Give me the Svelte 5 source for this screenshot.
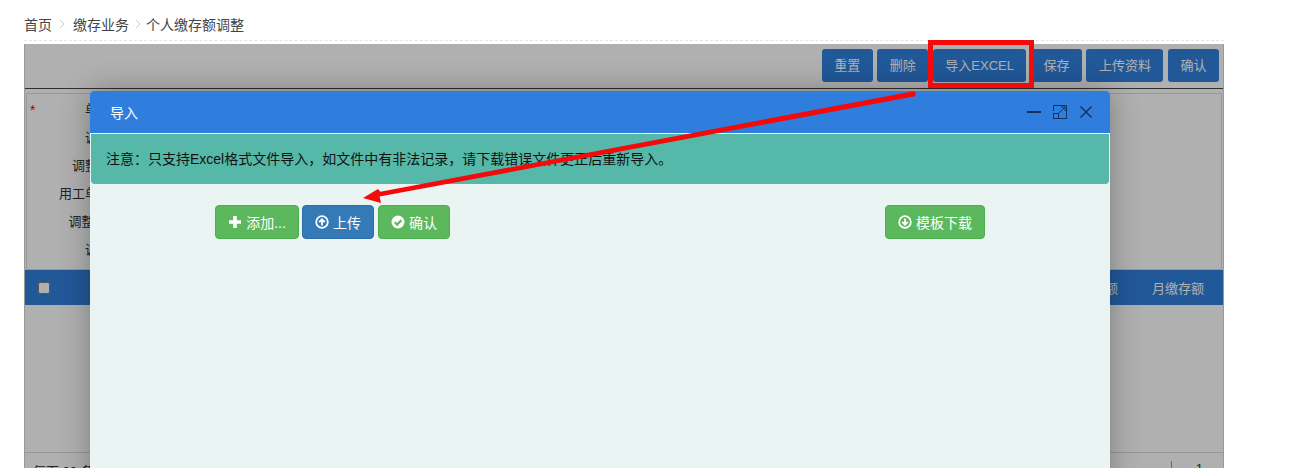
<script>
  const toolbar = ["重置", "删除", "导入EXCEL", "保存", "上传资料", "确认"];
  const fields = [
    { label: "单位名称", required: true },
    { label: "调整类型" },
    { label: "调整后基数" },
    { label: "用工单位编号" },
    { label: "调整后基数:" },
    { label: "调整原因" },
  ];
</script>

<div class="page">
  <div class="crumbs">
    <span>首页</span>
    <svg class="sep" viewBox="0 0 6 10" width="6" height="10"><path d="M1 1l4 4-4 4" /></svg>
    <span>缴存业务</span>
    <svg class="sep near" viewBox="0 0 6 10" width="6" height="10"><path d="M1 1l4 4-4 4" /></svg>
    <span>个人缴存额调整</span>
  </div>

  <div class="panel">
    <div class="sheet">
      <div class="toolbar">
        {#each toolbar as name}
          <button class="tool">{name}</button>
        {/each}
      </div>

      <div class="form">
        {#each fields as f}
          <div class="row">
            <span class="star">{f.required ? "*" : ""}</span>
            <span class="lbl">{f.label}</span>
          </div>
        {/each}
      </div>

      <div class="thead">
        <input type="checkbox" class="check" />
        <span class="th th-a">缴存基数额</span>
        <span class="th">月缴存额</span>
      </div>

      <div class="tbody"></div>

      <div class="foot">
        <span>每页 20 条</span>
        <span class="pager">1</span>
      </div>
    </div>

    <div class="mask"></div>

    <div class="modal">
      <div class="modal-head">
        <span class="modal-title">导入</span>
        <div class="win">
          <svg viewBox="0 0 14 14" width="14" height="14"><path d="M0 7h14" stroke-width="2" /></svg>
          <svg viewBox="0 0 14 14" width="14" height="14">
            <path d="M.5 6V.5h13v13H6" />
            <path d="M6 8l6-6M8 2h4v4" />
            <rect x=".5" y="8.500" width="5" height="5" />
          </svg>
          <svg class="x" viewBox="0 0 12 12" width="12" height="12"><path d="M.5.5l11 11M11.500.5l-11 11" stroke-width="1.4" /></svg>
        </div>
      </div>
      <div class="alert">注意：只支持Excel格式文件导入，如文件中有非法记录，请下载错误文件更正后重新导入。</div>
      <div class="actions">
        <button class="btn green add">
          <svg viewBox="0 0 14 14" width="14" height="14"><path d="M5.200 1h3.600v4.200H13v3.600H8.800V13H5.200V8.800H1V5.200h4.200z" fill="#fff" /></svg>
          添加...
        </button>
        <button class="btn blue up">
          <svg viewBox="0 0 14 14" width="14" height="14"><circle cx="7" cy="7" r="5.800" class="ring" /><path d="M7 10.500V5M4.200 7.200 7 4.200 9.800 7.200" class="glyph" /></svg>
          上传
        </button>
        <button class="btn green ok">
          <svg viewBox="0 0 14 14" width="14" height="14"><circle cx="7" cy="7" r="6.500" fill="#fff" /><path d="M3.800 7.200 6.200 9.600 10.300 5.200" fill="none" stroke="#5cb85c" stroke-width="2.200" /></svg>
          确认
        </button>
        <button class="btn green tpl">
          <svg viewBox="0 0 14 14" width="14" height="14"><circle cx="7" cy="7" r="5.800" class="ring" /><path d="M7 3.500V9M4.200 6.800 7 9.800 9.800 6.800" class="glyph" /></svg>
          模板下载
        </button>
      </div>
    </div>
  </div>

  <div class="mark-box"></div>
  <svg class="arrow" viewBox="0 0 1295 468" width="1295" height="468">
    <path d="M913.500 91.300A2.700 2.700 0 0 1 912.500 96.700L379.600 196.600 381 203 363 198 378 189 380.400 191.800Z" fill="#f40a0a" />
  </svg>
</div>

<style>
  :global(body) {
    margin: 0;
    background: #fff;
  }

  .page {
    position: relative;
    width: 1295px;
    height: 468px;
    overflow: hidden;
    font-family: "Liberation Sans", "Noto Sans CJK SC", sans-serif;
    font-size: 13px;
    color: #333;
  }

  .crumbs {
    display: flex;
    align-items: center;
    height: 41px;
    margin: 0 71px 0 24px;
    padding-top: 8px;
    box-sizing: border-box;
    border-bottom: 1px dashed #e4e4e4;
    font-size: 14px;
    color: #444;
  }

  .sep {
    margin: 0 8px 0 7px;
    fill: none;
    stroke: #c4c4c4;
  }
  .sep.near {
    margin: 0 5px 0 6px;
  }

  .panel {
    position: relative;
    width: 1200px;
    height: 424px;
    margin: 3px 0 0 24px;
    overflow: hidden;
  }

  .sheet {
    height: 100%;
    box-sizing: border-box;
    border-left: 1px solid #ddd;
    border-right: 1px solid #ddd;
  }

  .toolbar {
    display: flex;
    justify-content: flex-end;
    gap: 4.500px;
    height: 45px;
    padding: 5px 4px 0 0;
    box-sizing: border-box;
    border-bottom: 1px solid #444;
  }

  .tool {
    height: 33px;
    padding: 0 12.500px 3px;
    border: 0;
    border-radius: 3px;
    background: #3180dd;
    color: #fff;
    font: inherit;
  }

  .form {
    height: 177px;
    margin: 4px 1px 0;
    box-sizing: border-box;
    border: 1px solid #ddd;
  }

  .row {
    display: flex;
    align-items: center;
    height: 28px;
  }

  .star {
    width: 4px;
    margin: 3px 0 0 3px;
    color: #f00;
    font-size: 14px;
  }

  .lbl {
    width: 103px;
    text-align: right;
  }

  .thead {
    display: flex;
    align-items: center;
    height: 35px;
    background: #3180dd;
    color: #fff;
  }

  .check {
    width: 12px;
    height: 12px;
    margin: 0 0 0 13px;
  }

  .th {
    padding-right: 19px;
  }
  .th-a {
    margin-left: auto;
    padding-right: 34px;
  }

  .tbody {
    height: 147px;
    border-bottom: 1px solid #ddd;
  }

  .foot {
    display: flex;
    justify-content: space-between;
    padding: 8px 0 0 8px;
  }

  .pager {
    padding: 0 20px 0 24px;
    border-left: 1px solid #999;
  }

  .mask {
    position: absolute;
    inset: 0;
    background: rgba(0, 0, 0, 0.31);
  }

  .modal {
    position: absolute;
    left: 66px;
    top: 47px;
    width: 1020px;
    height: 400px;
    border-radius: 4px 4px 0 0;
    background: #eaf4f2;
    box-shadow: 0 0 30px rgba(0, 0, 0, 0.3);
  }

  .modal-head {
    display: flex;
    align-items: center;
    justify-content: space-between;
    height: 42px;
    padding: 0 18px 0 20px;
    border-radius: 4px 4px 0 0;
    background: #2f7edd;
    color: #fff;
  }

  .modal-title {
    font-size: 14px;
  }

  .win {
    display: flex;
    align-items: center;
    gap: 12px;
  }
  .win svg {
    fill: none;
    stroke: #14305c;
  }
  .win .x {
    margin-left: 1px;
  }

  .alert {
    height: 50px;
    margin: 1px 1px 0;
    padding: 0 15px;
    line-height: 50px;
    box-sizing: border-box;
    border-radius: 0 0 4px 4px;
    background: #56b8a9;
    color: #111;
    font-size: 14px;
  }

  .actions {
    display: flex;
    gap: 3px;
    padding: 21px 125px 0;
  }

  .btn {
    display: flex;
    align-items: center;
    justify-content: center;
    gap: 4px;
    height: 34px;
    padding: 0;
    border: 1px solid transparent;
    border-radius: 4px;
    color: #fff;
    font: inherit;
    font-size: 14px;
    box-sizing: border-box;
  }

  .green {
    background: #5cb85c;
    border-color: #4cae4c;
  }
  .blue {
    background: #337ab7;
    border-color: #2e6da4;
  }

  .add {
    width: 84px;
  }
  .up {
    width: 72px;
  }
  .ok {
    width: 72px;
    margin-left: 1px;
  }
  .tpl {
    width: 100px;
    margin-left: auto;
  }

  .ring,
  .glyph {
    fill: none;
    stroke: #fff;
    stroke-width: 1.800;
  }

  .mark-box {
    position: absolute;
    left: 928px;
    top: 40px;
    width: 106px;
    height: 48px;
    box-sizing: border-box;
    border: 5px solid #f40a0a;
  }

  .arrow {
    position: absolute;
    left: 0;
    top: 0;
    pointer-events: none;
  }
</style>
